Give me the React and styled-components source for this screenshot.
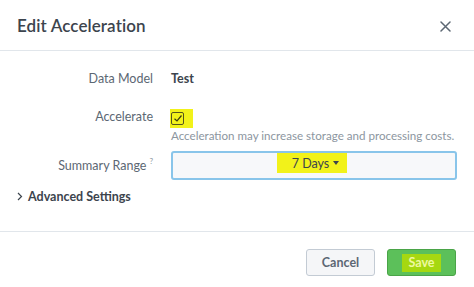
import styled, { createGlobalStyle } from "styled-components"

const GlobalStyle = createGlobalStyle`
  html, body {
    margin: 0;
    padding: 0;
    background: #fff;
  }
  body {
    font-family: "Lato", "Open Sans", sans-serif;
    color: #3c444d;
  }
`

const App = () => {
  return (
    <>
      <GlobalStyle />
      <Modal>
        {/* Header */}
        <Header>
          <Title>Edit Acceleration</Title>
          <CloseButton aria-label="close">
            <svg width="11" height="11" viewBox="0 0 11 11">
              <path d="M1 1 L10 10 M10 1 L1 10" stroke="#5c6773" strokeWidth="1.5" strokeLinecap="round" />
            </svg>
          </CloseButton>
        </Header>

        {/* Form body */}
        <Body>
          <FormRow $top={18}>
            <Label>Data Model</Label>
            <Value>Test</Value>
          </FormRow>

          <FormRow $top={18}>
            <Label>Accelerate</Label>
            <div>
              <Highlight $checkbox>
                <Checkbox>
                  <svg width="10" height="9" viewBox="0 0 10 9">
                    <path d="M1.5 4.8 L4 7 L8.5 1.5" stroke="#3b3b10" strokeWidth="1.2" fill="none" />
                  </svg>
                </Checkbox>
              </Highlight>
              <Help>Acceleration may increase storage and processing costs.</Help>
            </div>
          </FormRow>

          <FormRow $top={8} $center>
            <Label>
              Summary Range<Sup>?</Sup>
            </Label>
            <Select>
              <Highlight>
                7 Days <Caret />
              </Highlight>
            </Select>
          </FormRow>

          <Advanced>
            <svg width="6" height="9" viewBox="0 0 6 9">
              <path d="M1 1 L4.5 4.5 L1 8" stroke="#3c444d" strokeWidth="1.2" fill="none" />
            </svg>
            Advanced Settings
          </Advanced>
        </Body>

        {/* Footer */}
        <Footer>
          <Button>Cancel</Button>
          <Button $primary>
            <SaveMark>Save</SaveMark>
          </Button>
        </Footer>
      </Modal>
    </>
  )
}

const Modal = styled.div`
  width: 474px;
  height: 287px;
  display: flex;
  flex-direction: column;
  background: #fff;
`

const Header = styled.header`
  height: 51px;
  box-sizing: border-box;
  display: flex;
  align-items: center;
  justify-content: space-between;
  padding: 0 23px 0 17px;
  border-bottom: 1px solid #e1e6eb;
`

const Title = styled.h1`
  margin: 0;
  font-size: 17px;
  font-weight: 600;
  color: #3c444d;
  letter-spacing: 0.1px;
`

const CloseButton = styled.button`
  border: 0;
  background: none;
  padding: 0;
  display: flex;
  margin-top: 3px;
`

const Body = styled.section`
  flex: 1;
  display: flex;
  flex-direction: column;
`

const FormRow = styled.div`
  display: grid;
  grid-template-columns: 153px 1fr;
  column-gap: 18px;
  align-items: ${(p) => (p.$center ? "center" : "start")};
  margin-top: ${(p) => p.$top}px;
  padding-right: 17px;
`

const Label = styled.div`
  text-align: right;
  font-size: 12.5px;
  color: #5c6773;
  line-height: 20px;
`

const Sup = styled.sup`
  font-size: 8px;
  color: #8c96a0;
  margin-left: 3px;
  vertical-align: 6px;
  line-height: 0;
`

const Value = styled.div`
  font-size: 12.5px;
  font-weight: 700;
  color: #3c444d;
  line-height: 20px;
`

const Highlight = styled.span`
  display: inline-flex;
  align-items: center;
  background: #f2f21a;
  ${(p) =>
    p.$checkbox
      ? `
    width: 23px;
    height: 19px;
    padding-left: 1px;
    box-sizing: border-box;
    margin-left: -1px;
    margin-top: 1px;
  `
      : `
    height: 20px;
    padding: 0 8px 0 15px;
    gap: 4px;
    font-size: 12.5px;
    color: #3c444d;
  `}
`

const Checkbox = styled.span`
  width: 13px;
  height: 13px;
  box-sizing: border-box;
  border: 1px solid #55551c;
  border-radius: 2px;
  display: flex;
  align-items: center;
  justify-content: center;
`

const Help = styled.div`
  font-size: 11.6px;
  color: #8c96a0;
  margin-top: 1px;
  line-height: 14px;
`

const Select = styled.div`
  height: 29px;
  box-sizing: border-box;
  border: 2px solid #89c5ea;
  border-radius: 3px;
  background: #f7f8fa;
  display: flex;
  align-items: flex-start;
  justify-content: center;
  padding-right: 4px;
`

const Caret = styled.span`
  width: 0;
  height: 0;
  border-left: 3px solid transparent;
  border-right: 3px solid transparent;
  border-top: 4px solid #3c444d;
`

const Advanced = styled.div`
  display: flex;
  align-items: center;
  gap: 5px;
  margin-top: 8px;
  padding-left: 17px;
  font-size: 12.5px;
  font-weight: 700;
  color: #3c444d;
  line-height: 17px;
`

const Footer = styled.footer`
  height: 56px;
  box-sizing: border-box;
  border-top: 1px solid #e1e6eb;
  display: flex;
  justify-content: flex-end;
  align-items: flex-start;
  gap: 12px;
  padding: 17px 18px 0 0;
`

const Button = styled.button`
  width: 69px;
  height: 27px;
  box-sizing: border-box;
  border-radius: 3px;
  font-family: inherit;
  font-size: 12.5px;
  font-weight: 700;
  display: flex;
  align-items: center;
  justify-content: center;
  border: 1px solid ${(p) => (p.$primary ? "#4aa448" : "#c3cbd4")};
  background: ${(p) => (p.$primary ? "#5cc05a" : "#f5f6f8")};
  color: ${(p) => (p.$primary ? "#fff" : "#5c6773")};
`

const SaveMark = styled.span`
  background: #a6d810;
  color: #eef8a0;
  padding: 1px 6px 2px;
`

export default App
